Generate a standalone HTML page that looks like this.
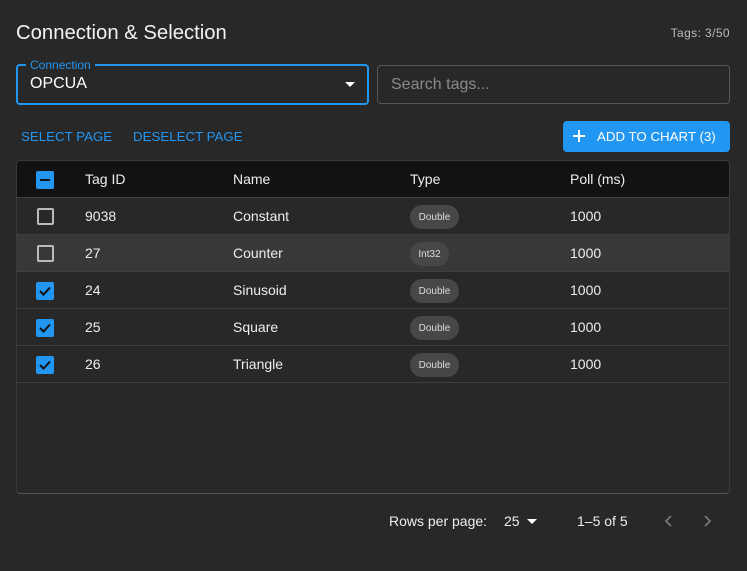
<!DOCTYPE html>
<html><head><style>
*{box-sizing:border-box;margin:0;padding:0}
body{width:747px;height:571px;background:#282828;font-family:"Liberation Sans",sans-serif;color:#fff;position:relative;overflow:hidden}
.a{position:absolute}
.title{left:16px;top:22px;font-size:20.3px;color:#f2f2f2}
.tags{right:17px;top:26px;font-size:12px;color:#bbb;letter-spacing:.4px}
.conn{left:16px;top:64px;width:353px;height:41px;border:2px solid #2196f3;border-radius:4px}
.conn .lbl{position:absolute;left:8px;top:-8px;background:#282828;padding:0 4px;font-size:12px;color:#2196f3}
.conn .v{position:absolute;left:12px;top:10px;font-size:16px}
.caret{position:absolute;right:12px;top:16px;width:0;height:0;border-left:5px solid transparent;border-right:5px solid transparent;border-top:5px solid #fff}
.search{left:377px;top:65px;width:353px;height:39px;border:1px solid #555;border-radius:4px;font-size:16px;color:#8a8a8a;padding:11px 13px}
.btxt{top:129px;font-size:13.3px;color:#2196f3}
.add{left:563px;top:121px;width:167px;height:31px;background:#2196f3;border-radius:4px;font-size:13.3px;color:#fff;padding:8px 0 0 34px}
.add svg{position:absolute;left:10px;top:9px}
.tbl{left:16px;top:160px;width:714px;height:334px;background:#282828;border:1px solid #3a3a3a;border-radius:4px;overflow:hidden;border-bottom:1px solid #555}
.row{position:absolute;left:0;width:714px;height:37px;border-bottom:1px solid #3f3f3f;font-size:14px;color:#eee}
.row span{position:absolute;top:10px}
.hdr{background:#121212;top:0}
.cb{position:absolute;left:19px;top:10px;width:18px;height:18px;border-radius:2px}
.un{border:2px solid #bbb;width:17px;height:17px;left:20px;top:10px}
.on{background:#2196f3}
.chip{position:absolute;left:393px;top:7px;height:24px;width:49px;border-radius:12px;background:#474747;font-size:10px;color:#ddd;display:flex;align-items:center;justify-content:center}
.pg{top:513px;font-size:14px;color:#eee}
</style></head><body>
<div class="a title">Connection &amp; Selection</div>
<div class="a tags">Tags: 3/50</div>
<div class="a conn"><div class="lbl">Connection</div><div class="v" style="top:9px">OPCUA</div><div class="caret"></div></div>
<div class="a search" style="padding-top:10px">Search tags...</div>
<div class="a btxt" style="left:21px">SELECT PAGE</div>
<div class="a btxt" style="left:133px">DESELECT PAGE</div>
<div class="a add"><svg width="12" height="12"><path d="M6 0v12M0 6h12" stroke="#fff" stroke-width="2"/></svg>ADD TO CHART (3)</div>
<div class="a tbl">
<div class="row hdr"><div class="cb on"><div style="position:absolute;left:4px;top:8px;width:10px;height:2px;background:#111"></div></div><span style="left:68px">Tag ID</span><span style="left:216px">Name</span><span style="left:393px">Type</span><span style="left:553px">Poll (ms)</span></div>
<div class="row" style="top:37px"><div class="cb un"></div><span style="left:68px">9038</span><span style="left:216px">Constant</span><div class="chip">Double</div><span style="left:553px">1000</span></div>
<div class="row" style="top:74px;background:#383838"><div class="cb un"></div><span style="left:68px">27</span><span style="left:216px">Counter</span><div class="chip" style="width:39px">Int32</div><span style="left:553px">1000</span></div>
<div class="row" style="top:111px"><div class="cb on"><svg width="18" height="18"><path d="M4 9l3.5 3.5L14 5.5" stroke="#111" stroke-width="2" fill="none"/></svg></div><span style="left:68px">24</span><span style="left:216px">Sinusoid</span><div class="chip">Double</div><span style="left:553px">1000</span></div>
<div class="row" style="top:148px"><div class="cb on"><svg width="18" height="18"><path d="M4 9l3.5 3.5L14 5.5" stroke="#111" stroke-width="2" fill="none"/></svg></div><span style="left:68px">25</span><span style="left:216px">Square</span><div class="chip">Double</div><span style="left:553px">1000</span></div>
<div class="row" style="top:185px"><div class="cb on"><svg width="18" height="18"><path d="M4 9l3.5 3.5L14 5.5" stroke="#111" stroke-width="2" fill="none"/></svg></div><span style="left:68px">26</span><span style="left:216px">Triangle</span><div class="chip">Double</div><span style="left:553px">1000</span></div>
</div>
<div class="a pg" style="left:389px">Rows per page:</div>
<div class="a pg" style="left:504px">25</div>
<div class="a" style="left:527px;top:519px;border-left:5px solid transparent;border-right:5px solid transparent;border-top:5px solid #fff"></div>
<div class="a pg" style="left:577px">1–5 of 5</div>
<svg class="a" style="left:660px;top:511px" width="60" height="20"><path d="M11 5l-5 5 5 5M45 5l5 5-5 5" stroke="#777" stroke-width="1.8" fill="none"/></svg>
</body></html>
